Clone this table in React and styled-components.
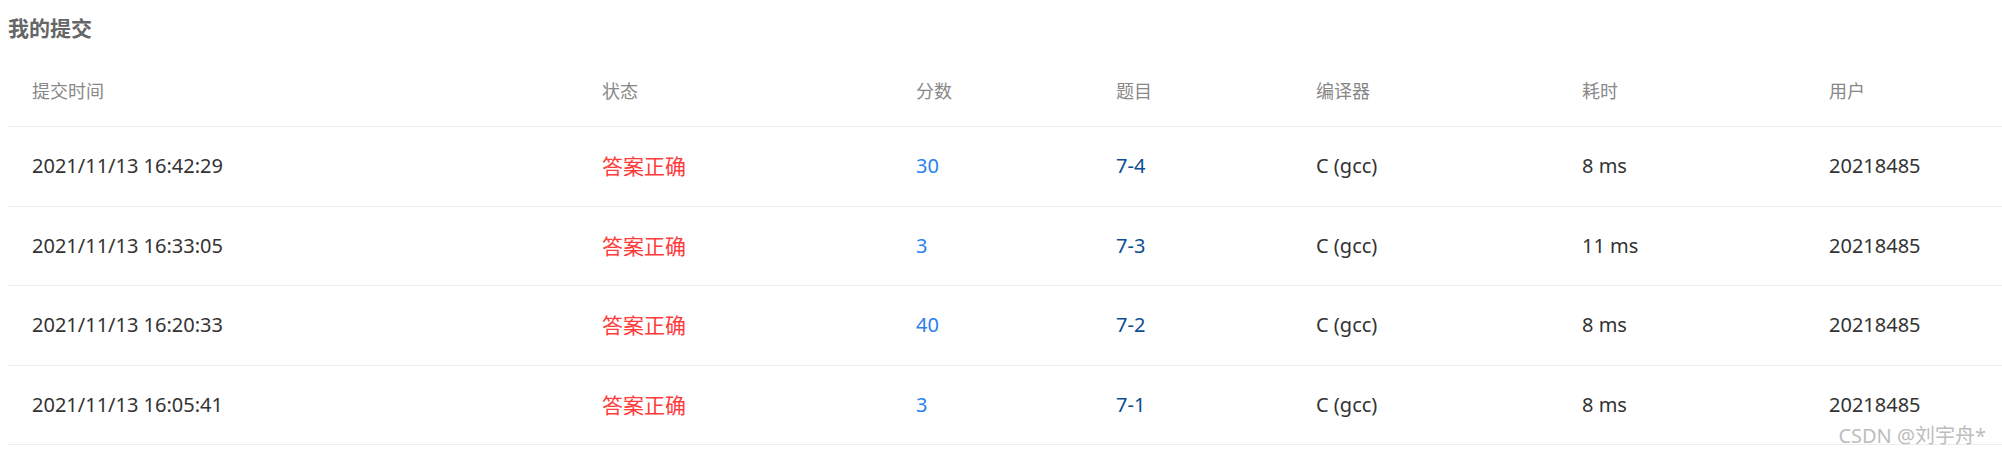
import React from 'react';
import styled, { createGlobalStyle } from 'styled-components';

const GlobalStyle = createGlobalStyle`
  body {
    margin: 0;
    background: #fff;
    font-family: "Noto Sans", "Noto Sans CJK SC", sans-serif;
  }
`;

const StyledPage = styled.main`
  position: relative;
  padding-top: 14px;
  height: 456px;
  box-sizing: border-box;
  overflow: hidden;
`;

const StyledTitle = styled.h2`
  margin: 0 0 0 8px;
  font-size: 21px;
  line-height: 29px;
  font-weight: 700;
  color: #666;
`;

const StyledTable = styled.div`
  margin: 13px 0 0 8px;
`;

const StyledRow = styled.div`
  display: grid;
  grid-template-columns: 570px 314px 200px 200px 266px 247px 1fr;
  align-items: center;
  box-sizing: border-box;
  height: ${({ $head }) => ($head ? '71px' : '79.5px')};
  border-bottom: 1px solid #ededed;
`;

const StyledCell = styled.div`
  padding-left: 24px;
  font-size: ${({ $head, $tone }) => ($head ? '18px' : $tone === 'red' ? '21px' : '20px')};
  line-height: 26px;
  white-space: nowrap;
  color: ${({ $tone }) =>
    ({
      head: '#888',
      red: '#ff3a3a',
      blue: '#2a80ee',
      navy: '#0d4d92',
    }[$tone] || '#333')};
`;

const StyledMark = styled.div`
  position: absolute;
  right: 16px;
  top: 424px;
  font-size: 20px;
  line-height: 24px;
  color: #bdbdbd;
`;

const headers = ['提交时间', '状态', '分数', '题目', '编译器', '耗时', '用户'];

const submissions = [
  { time: '2021/11/13 16:42:29', score: '30', problem: '7-4', cost: '8 ms' },
  { time: '2021/11/13 16:33:05', score: '3', problem: '7-3', cost: '11 ms' },
  { time: '2021/11/13 16:20:33', score: '40', problem: '7-2', cost: '8 ms' },
  { time: '2021/11/13 16:05:41', score: '3', problem: '7-1', cost: '8 ms' },
];

const App = () => {
  return (
    <StyledPage>
      <GlobalStyle />
      <StyledTitle>我的提交</StyledTitle>

      <StyledTable>
        <StyledRow $head>
          {headers.map(h => (
            <StyledCell key={h} $head $tone="head">
              {h}
            </StyledCell>
          ))}
        </StyledRow>

        {submissions.map(s => (
          <StyledRow key={s.time}>
            <StyledCell>{s.time}</StyledCell>
            <StyledCell $tone="red">答案正确</StyledCell>
            <StyledCell $tone="blue">{s.score}</StyledCell>
            <StyledCell $tone="navy">{s.problem}</StyledCell>
            <StyledCell>C (gcc)</StyledCell>
            <StyledCell>{s.cost}</StyledCell>
            <StyledCell>20218485</StyledCell>
          </StyledRow>
        ))}
      </StyledTable>

      <StyledMark>CSDN @刘宇舟*</StyledMark>
    </StyledPage>
  );
};

export default App;
